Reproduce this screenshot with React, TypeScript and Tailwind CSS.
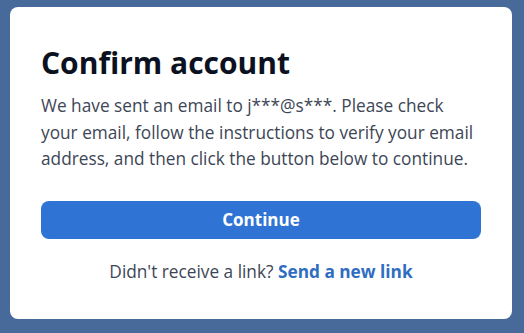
export default function App() {
  return (
    <div
      className="w-[524px] h-[333px] bg-[#476a9a] pt-[7px] pl-[10px]"
      style={{ fontFamily: '"Open Sans", sans-serif' }}
    >
      <div className="w-[502px] h-[312px] bg-white rounded-[8px] px-[31px] pt-[36px]">
        <h1 className="text-[30px] leading-[40px] font-bold text-[#0b1120]">Confirm account</h1>
        <p className="mt-[10px] text-[17.25px] leading-[26.5px] text-[#3d4656]">
          We have sent an email to j***@s***. Please check your email, follow the instructions to verify your email
          address, and then click the button below to continue.
        </p>
        <button className="mt-[28px] w-full h-[38px] rounded-[8px] bg-[#2f74d4] text-white text-[17px] font-bold">
          Continue
        </button>
        <p className="mt-[20px] text-center text-[17.25px] leading-[26px] text-[#3d4656]">
          Didn't receive a link? <a className="font-bold text-[#2f6dc2]">Send a new link</a>
        </p>
      </div>
    </div>
  );
}
